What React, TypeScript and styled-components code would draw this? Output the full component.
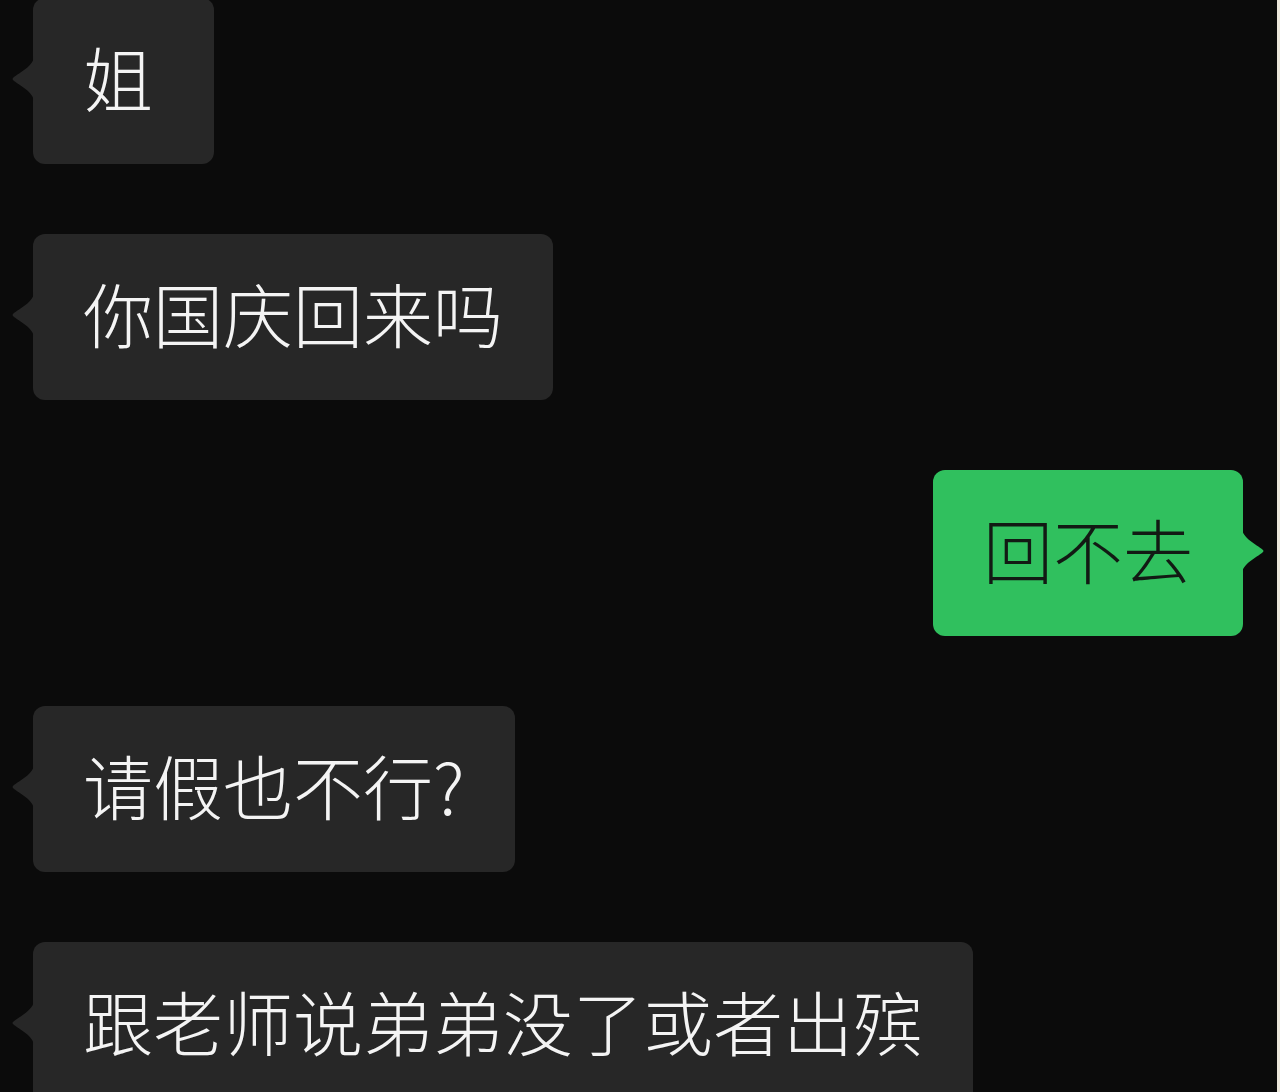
import React from "react";
import styled, { createGlobalStyle } from "styled-components";

type Message = { id: number; text: string; mine?: boolean };

const messages: Message[] = [
  { id: 1, text: "姐" },
  { id: 2, text: "你国庆回来吗" },
  { id: 3, text: "回不去", mine: true },
  { id: 4, text: "请假也不行?" },
  { id: 5, text: "跟老师说弟弟没了或者出殡" },
];

const GlobalStyle = createGlobalStyle`
  html, body {
    margin: 0;
    padding: 0;
    background: #0b0b0b;
    overflow: hidden;
  }
  * {
    box-sizing: border-box;
  }
`;

export default function App() {
  return (
    <>
      <GlobalStyle />
      <StyledScreen>
        <StyledList>
          {messages.map((m) => (
            <StyledRow key={m.id} mine={!!m.mine}>
              <StyledBubble mine={!!m.mine}>
                <StyledTail mine={!!m.mine} viewBox="0 0 22 46" width="22" height="46">
                  {m.mine ? (
                    <path d="M0 0 C0 10 14 16 21 22 Q22 23 21 24 C14 30 0 36 0 46 Z" />
                  ) : (
                    <path d="M22 0 C22 10 8 16 1 22 Q0 23 1 24 C8 30 22 36 22 46 Z" />
                  )}
                </StyledTail>
                {m.text}
              </StyledBubble>
            </StyledRow>
          ))}
        </StyledList>
      </StyledScreen>
    </>
  );
}

const StyledScreen = styled.main`
  width: 1280px;
  height: 1092px;
  overflow: hidden;
  background: #0b0b0b;
  border-right: 3px solid #ece8dc;
  font-family: "Noto Sans CJK SC", "Noto Sans", sans-serif;
`;

const StyledList = styled.section`
  display: flex;
  flex-direction: column;
  gap: 70px;
  margin-top: -2px;
  padding: 0 34px 0 33px;
`;

const StyledRow = styled.div<{ mine: boolean }>`
  display: flex;
  justify-content: ${(p) => (p.mine ? "flex-end" : "flex-start")};
`;

const StyledBubble = styled.div<{ mine: boolean }>`
  position: relative;
  min-width: 181px;
  padding: 44px 50px 52px 50px;
  border-radius: 12px;
  font-size: 70px;
  line-height: 70px;
  font-weight: 300;
  white-space: nowrap;
  background: ${(p) => (p.mine ? "#30c05e" : "#272727")};
  color: ${(p) => (p.mine ? "#121a14" : "#f4f4f4")};
`;

const StyledTail = styled.svg<{ mine: boolean }>`
  position: absolute;
  top: 58px;
  ${(p) => (p.mine ? "right: -21px;" : "left: -21px;")}
  fill: ${(p) => (p.mine ? "#30c05e" : "#272727")};
`;
